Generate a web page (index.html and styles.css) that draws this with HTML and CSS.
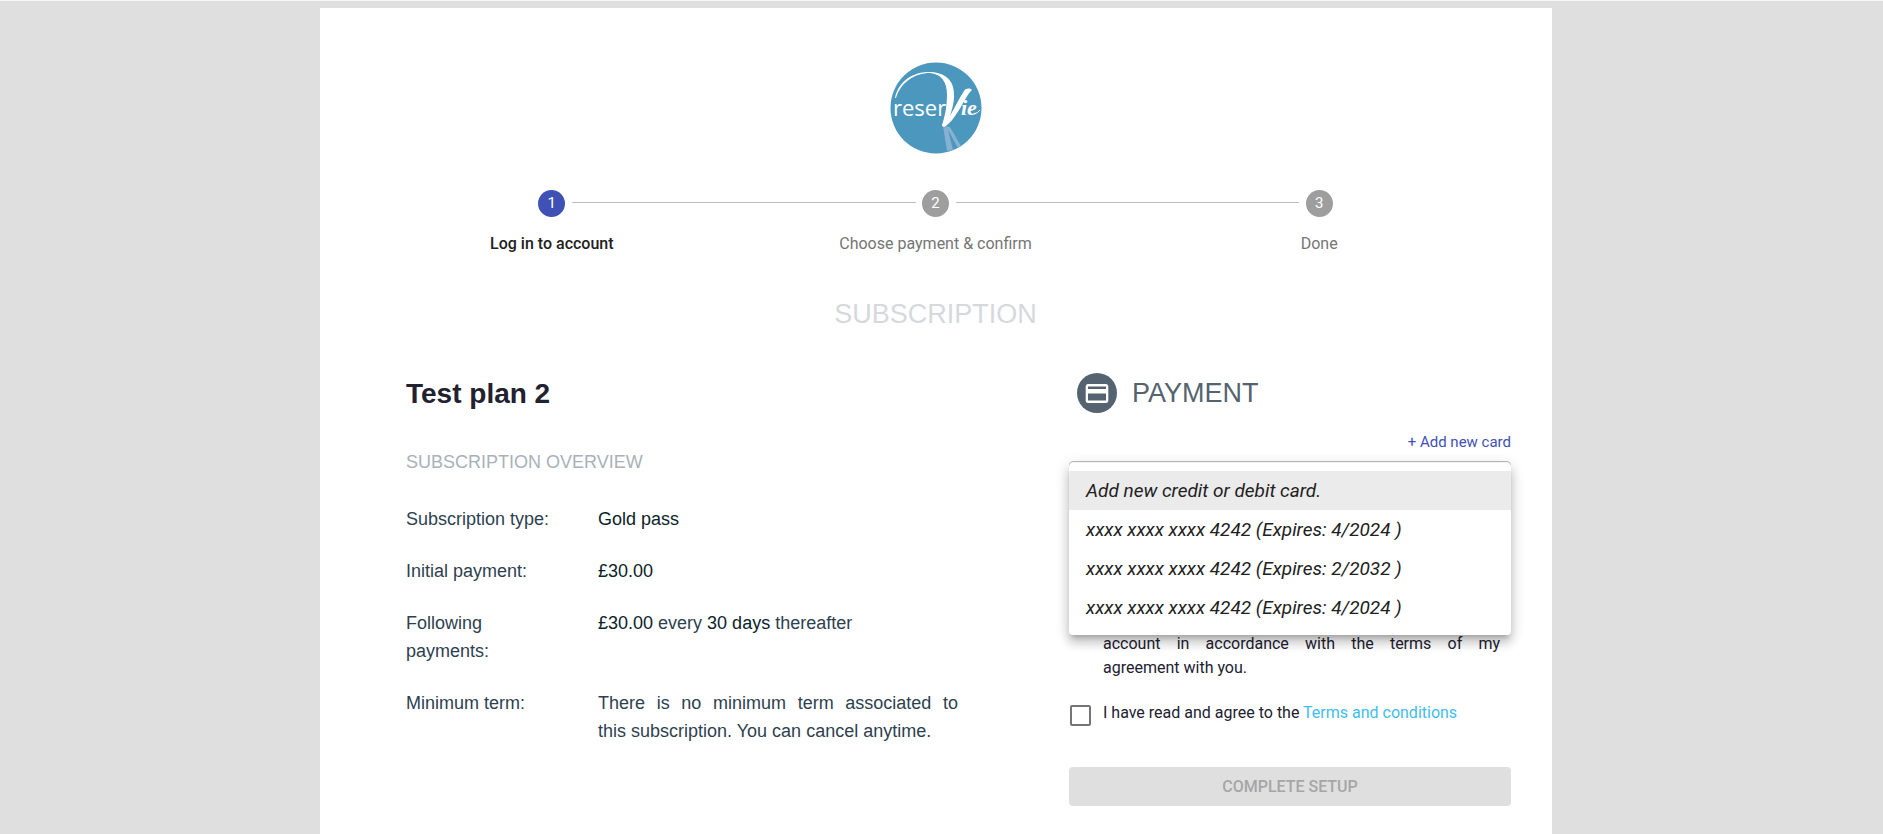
FILE: index.html
```html
<!DOCTYPE html>
<html lang="en">
<head>
    <meta charset="UTF-8">
    <meta name="viewport" content="width=device-width, initial-scale=1.0">
    <title>Reservie - Subscription</title>
    <link rel="stylesheet" href="styles.css">
</head>
<body>
    <main class="card">
        <!-- Logo -->
        <header class="logo">
            <svg width="92" height="92" viewBox="0 0 92 92" role="img" aria-label="Reservie">
                <circle cx="46" cy="46" r="45.5" fill="#4c97bd"/>
                <path d="M53 64 L57 89 L63 88 L58 68 L68 86 L71 84 L60 65 Z" fill="#86b1d2"/>
                <path d="M5 36 C9 17 26 9 41 10 C57 11 65 20 64 35 C64 41 62 47 60 54 C65 45 70 35 74 29 C76 26 80 26 82 28 C76 34 73 42 69 48 C64 56 60 61 56 64 C54 65 52 65 52 63 C55 54 57 44 57 33 C57 19 51 12 40 11 C25 11 11 20 6 36 Z" fill="#fff"/>
                <text x="3" y="54" class="logo-text">reser</text>
                <text x="71" y="53" class="logo-script">ie</text>
                <path d="M84 52 Q88 51 90 48" fill="none" stroke="#fff"/>
            </svg>
        </header>

        <!-- Stepper -->
        <ol class="stepper">
            <li class="step active">
                <span class="step-icon">1</span>
                <span class="step-label">Log in to account</span>
            </li>
            <li class="step">
                <span class="step-icon">2</span>
                <span class="step-label">Choose payment &amp; confirm</span>
            </li>
            <li class="step">
                <span class="step-icon">3</span>
                <span class="step-label">Done</span>
            </li>
        </ol>

        <h1 class="page-title">SUBSCRIPTION</h1>

        <div class="columns">
            <!-- Plan details -->
            <section class="plan">
                <h2>Test plan 2</h2>
                <h3>SUBSCRIPTION OVERVIEW</h3>
                <dl class="overview">
                    <dt>Subscription type:</dt>
                    <dd><strong>Gold pass</strong></dd>
                    <dt>Initial payment:</dt>
                    <dd><strong>£30.00</strong></dd>
                    <dt>Following payments:</dt>
                    <dd><strong>£30.00</strong> every <strong>30 days</strong> thereafter</dd>
                    <dt>Minimum term:</dt>
                    <dd>There is no minimum term associated to this&nbsp;subscription. You can cancel anytime.</dd>
                </dl>
            </section>

            <!-- Payment form -->
            <form class="payment">
                <h2 class="payment-title">
                    <svg width="40" height="40" viewBox="0 0 40 40" aria-hidden="true">
                        <circle cx="20" cy="20" r="20" fill="#54636f"/>
                        <path fill="#fff" d="M29 11H11c-1.300 0-2.300 1-2.300 2.300L8.700 27.700c0 1.300 1 2.300 2.300 2.300H29c1.300 0 2.300-1 2.300-2.300V13.300C31.300 12 30.300 11 29 11zM29 27.500H11V20.500H29zM29 16H11V13.500H29z"/>
                    </svg>
                    PAYMENT
                </h2>
                <a class="add-card" href="#card">+ Add new card</a>

                <div class="card-select">
                    <select id="card" aria-label="Card">
                        <option>Add new credit or debit card.</option>
                    </select>
                    <ul class="menu" role="listbox" aria-label="Cards">
                        <li class="selected" role="option" aria-selected="true">Add new credit or debit card.</li>
                        <li role="option">xxxx xxxx xxxx 4242 (Expires: 4/2024 )</li>
                        <li role="option">xxxx xxxx xxxx 4242 (Expires: 2/2032 )</li>
                        <li role="option">xxxx xxxx xxxx 4242 (Expires: 4/2024 )</li>
                    </ul>
                </div>

                <p class="mandate">account in accordance with the terms of my agreement&nbsp;with you.</p>

                <div class="terms">
                    <input type="checkbox" id="terms">
                    <label for="terms">I have read and agree to the <a href="#terms">Terms and conditions</a></label>
                </div>

                <button type="submit" class="submit" disabled>COMPLETE SETUP</button>
            </form>
        </div>
    </main>
</body>
</html>
```
FILE: styles.css
```css
/* Basic reset */
* {
    margin: 0;
    padding: 0;
    box-sizing: border-box;
}

body {
    min-height: 100vh;
    padding: 7px 11px 0 0;
    border-top: 1px solid #f7f7f7;
    background-color: #dfdfdf;
    font-family: "Liberation Sans", Arial, sans-serif;
    color: #2e3f50;
}

.card {
    max-width: 1232px;
    min-height: calc(100vh - 8px);
    margin: 0 auto;
    padding: 54px 41px 24px 40px;
    background-color: #fff;
}

.logo svg {
    display: block;
    margin: 0 auto;
}

.logo-text {
    font-family: "Open Sans", sans-serif;
    font-size: 22px;
    fill: #fff;
}

.logo-script {
    font-family: "Liberation Serif", serif;
    font-size: 22px;
    font-style: italic;
    font-weight: bold;
    fill: #fff;
}

/* Stepper */
.stepper {
    display: flex;
    margin-top: 36px;
    list-style: none;
    font-family: Roboto, sans-serif;
}

.step {
    position: relative;
    flex: 1;
    display: flex;
    flex-direction: column;
    align-items: center;
    gap: 15px;
}

.step + .step::before {
    content: "";
    position: absolute;
    top: 12px;
    left: calc(-50% + 20px);
    right: calc(50% + 20px);
    border-top: 1px solid #bdbdbd;
}

.step-icon {
    width: 27px;
    height: 27px;
    border-radius: 50%;
    background-color: #9e9e9e;
    color: #fff;
    font-size: 15px;
    line-height: 27px;
    text-align: center;
}

.step-label {
    color: #757575;
    font-size: 16px;
    line-height: 24px;
}

.active .step-icon {
    background-color: #3f51b5;
}

.active .step-label {
    color: #212121;
    font-weight: 500;
}

.page-title {
    margin-top: 42px;
    color: #d5d9dd;
    font-size: 27px;
    font-weight: normal;
    line-height: 32px;
    text-align: center;
}

/* Two columns */
.columns {
    display: flex;
    justify-content: space-between;
    margin-top: 42px;
    padding-left: 46px;
}

.plan {
    flex: 0 1 552px;
}

.plan h2 {
    color: #212130;
    font-size: 28px;
    line-height: 44px;
}

.plan h3 {
    margin-top: 32px;
    color: #a9b1b9;
    font-size: 18px;
    font-weight: normal;
    line-height: 28px;
}

.overview {
    display: grid;
    grid-template-columns: 168px 1fr;
    gap: 24px;
    margin-top: 29px;
    font-size: 18px;
    line-height: 28px;
}

.overview dt {
    padding-right: 12px;
}

.overview dd {
    text-align: justify;
}

.overview strong {
    color: #0b2329;
    font-weight: normal;
}

/* Payment form */
.payment {
    flex: 0 1 442px;
    font-family: Roboto, sans-serif;
    color: #212130;
}

.payment-title {
    display: flex;
    align-items: center;
    gap: 15px;
    padding-left: 8px;
    color: #54636f;
    font-family: "Liberation Sans", Arial, sans-serif;
    font-size: 27px;
    font-weight: normal;
    line-height: 42px;
}

.add-card {
    display: block;
    margin-top: 16px;
    color: #3f51b5;
    font-size: 15px;
    line-height: 24px;
    text-align: right;
    text-decoration: none;
}

.card-select {
    position: relative;
    margin-top: 7px;
}

.card-select select {
    display: block;
    width: 100%;
    height: 48px;
    border: 1px solid #bdbdbd;
    border-radius: 4px;
    background-color: #fff;
    font: inherit;
}

.menu {
    position: absolute;
    top: 2px;
    left: 0;
    width: 100%;
    padding: 8px 0;
    border-radius: 4px;
    background-color: #fff;
    box-shadow: 0 5px 5px -3px rgba(0, 0, 0, 0.2), 0 8px 10px 1px rgba(0, 0, 0, 0.14), 0 3px 14px 2px rgba(0, 0, 0, 0.12);
    color: #212121;
    font-size: 19px;
    font-style: italic;
    line-height: 39px;
    list-style: none;
}

.menu li {
    padding: 0 17px;
}

.menu .selected {
    background-color: #ebebeb;
}

.mandate {
    margin-top: 123px;
    padding: 0 11px 0 34px;
    font-size: 16px;
    line-height: 24px;
    text-align: justify;
}

.terms {
    display: flex;
    gap: 12px;
    margin-top: 21px;
    padding-left: 1px;
    font-size: 16px;
    line-height: 24px;
}

.terms input {
    appearance: none;
    width: 21px;
    height: 21px;
    margin-top: 4px;
    border: 2px solid #757575;
    border-radius: 2px;
}

.terms a {
    color: #42bdf0;
    text-decoration: none;
}

.submit {
    display: block;
    width: 100%;
    height: 39px;
    margin-top: 41px;
    border: none;
    border-radius: 4px;
    background-color: #dfdfdf;
    color: #a6a6a6;
    font-family: Roboto, sans-serif;
    font-size: 16px;
    font-weight: 500;
}
```
